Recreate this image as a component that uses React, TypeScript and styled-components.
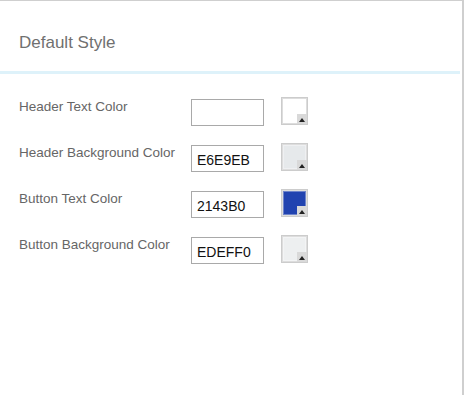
import React from "react";
import styled, { createGlobalStyle } from "styled-components";

// 기본 스타일 색상 설정 패널

const GlobalStyle = createGlobalStyle`
    body, html {
        margin: 0;
        padding: 0;
        background: #ffffff;
        font-family: 'Liberation Sans', Arial, sans-serif;
    }
`;

const Panel = styled.div`
    width: 464px;
    height: 395px;
    box-sizing: border-box;
    border-top: 1px solid #cfcfcf;
    border-right: 2px solid #cfcfcf;
    background: #ffffff;
`;

const Header = styled.div`
    height: 73px;
    box-sizing: border-box;
    padding: 32px 0 0 19px;
    margin-right: 2px;
    border-bottom: 3px solid #def2fa;
    font-size: 17px;
    line-height: 20px;
    color: #707070;
`;

const Body = styled.div`
    display: flex;
    flex-direction: column;
    gap: 18px;
    padding: 23px 0 0 19px;
`;

const Row = styled.div`
    display: grid;
    grid-template-columns: 155px 73px 28px;
    column-gap: 17px;
    align-items: start;
    height: 28px;
`;

const Label = styled.div`
    padding-top: 2px;
    font-size: 13.5px;
    line-height: 16px;
    color: #666666;
    white-space: nowrap;
`;

const HexInput = styled.input`
    width: 73px;
    height: 27px;
    margin: 2px 0 0;
    box-sizing: border-box;
    border: 1px solid #a9a9a9;
    padding: 2px 0 0 5px;
    font-family: 'Liberation Sans', Arial, sans-serif;
    font-size: 14px;
    color: #111111;
    outline: none;
    background: #ffffff;
`;

const Swatch = styled.div`
    position: relative;
    width: 27px;
    height: 28px;
    box-sizing: border-box;
    border: 1px solid #cccccc;
    padding: 1px;
    background: #dddddd;
`;

const Fill = styled.div<{ $color: string }>`
    width: 100%;
    height: 100%;
    box-sizing: border-box;
    background: ${(p) => p.$color};
    border: 1px solid ${(p) => (p.$color === "#FFFFFF" ? "#ffffff" : "rgba(255,255,255,0.35)")};
`;

// 오른쪽 아래 드롭다운 표시
const Notch = styled.div`
    position: absolute;
    right: 0;
    bottom: 0;
    width: 10px;
    height: 10px;
    background: #d9d9d9;
    display: flex;
    align-items: center;
    justify-content: center;

    &::after {
        content: "";
        width: 0;
        height: 0;
        margin-top: 1px;
        border-left: 3.5px solid transparent;
        border-right: 3.5px solid transparent;
        border-bottom: 4px solid #222222;
    }
`;

const rows = [
    { label: "Header Text Color", value: "", color: "#FFFFFF" },
    { label: "Header Background Color", value: "E6E9EB", color: "#E6E9EB" },
    { label: "Button Text Color", value: "2143B0", color: "#2143B0" },
    { label: "Button Background Color", value: "EDEFF0", color: "#EDEFF0" },
];

const App: React.FC = () => {
    return (
        <>
            <GlobalStyle />
            <Panel>
                <Header>Default Style</Header>
                <Body>
                    {rows.map((r) => (
                        <Row key={r.label}>
                            <Label>{r.label}</Label>
                            <HexInput type="text" defaultValue={r.value} />
                            <Swatch>
                                <Fill $color={r.color} />
                                <Notch />
                            </Swatch>
                        </Row>
                    ))}
                </Body>
            </Panel>
        </>
    );
};

export default App;
